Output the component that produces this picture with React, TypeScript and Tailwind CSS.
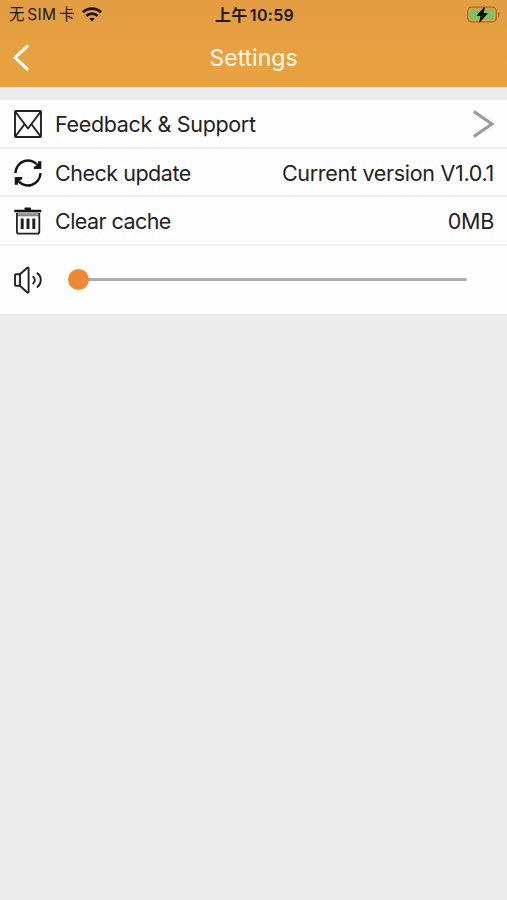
import React, { useState } from 'react';

const WifiIcon = () => (
  <svg width="20" height="15" viewBox="0 0 20 15" fill="none" stroke="#1d1206" strokeWidth="2.9">
    <path d="M1 5.2C6 0.4 14 0.4 19 5.2" />
    <path d="M4.3 8.9C7.5 5.9 12.5 5.9 15.7 8.9" />
    <path d="M10 14.6L7.2 11.7C8.8 10.3 11.2 10.3 12.8 11.7Z" fill="#1d1206" stroke="none" />
  </svg>
);

const BatteryIcon = () => (
  <svg width="33" height="18" viewBox="0 0 33 18" fill="none">
    <rect x="0.7" y="1.2" width="28.6" height="14.6" rx="4" stroke="#a86c24" strokeWidth="1.3" />
    <rect x="2.8" y="3.3" width="24.4" height="10.4" rx="2" fill="#7cc268" />
    <path d="M31 5.8C33 6.5 33 10.5 31 11.2Z" fill="#a86c24" />
    <path
      d="M17.6 1.1L10.2 9.4H14.3L12.6 16.1L20.2 7.6H16Z"
      fill="#0c0a04"
      stroke="#0c0a04"
      strokeWidth="1"
      strokeLinejoin="round"
    />
  </svg>
);

const BackIcon = () => (
  <svg width="18" height="28" viewBox="0 0 18 28" fill="none" stroke="#fffaf0" strokeWidth="3.2" strokeLinecap="round" strokeLinejoin="round">
    <path d="M15.2 2.4L3 13.6L15.2 25" />
  </svg>
);

const MailIcon = () => (
  <svg width="28" height="28" viewBox="0 0 28 28" fill="none" stroke="#222" strokeWidth="1.9" strokeLinejoin="round">
    <rect x="1" y="1" width="26" height="26" rx="0.8" />
    <path d="M1.5 2L14 18.5L26.5 2" />
    <path d="M1.5 26.2L10.5 14.2M26.5 26.2L17.5 14.2" />
  </svg>
);

const UpdateIcon = () => (
  <svg width="28" height="28" viewBox="0 0 28 28" fill="none" stroke="#151515" strokeWidth="2.4">
    <path d="M1.5 14A12.5 12.5 0 0 1 24.6 7.4" />
    <path d="M26.5 14A12.5 12.5 0 0 1 3.4 20.6" />
    <path d="M27.3 2.2V9.8H19.8V7.4L24 7V2.2Z" fill="#151515" stroke="none" />
    <path d="M27.3 9.8H19.6L23.6 5.6Z" fill="#151515" stroke="none" />
    <path d="M0.7 25.8V18.2H8.2V20.6L4 21V25.8Z" fill="#151515" stroke="none" />
    <path d="M0.7 18.2H8.4L4.4 22.4Z" fill="#151515" stroke="none" />
  </svg>
);

const TrashIcon = () => (
  <svg width="28" height="28" viewBox="0 0 28 28" fill="none">
    <path d="M10.5 2.8V1.2Q10.5 0.5 11.3 0.5H16.1Q17 0.5 17 1.2V2.8H27.3V5.3H0.3V2.8Z" fill="#111" />
    <rect x="2.8" y="5.3" width="22.6" height="3.3" fill="#999" />
    <path d="M2.9 6V24.4Q2.9 26.7 5 26.7H23.2Q25.3 26.7 25.3 24.4V6" stroke="#222" strokeWidth="1.8" />
    <path d="M2.9 8.8H25.2" stroke="#555" strokeWidth="0.8" />
    <path d="M8.2 11.4V22M14 11.4V22M19.8 11.4V22" stroke="#222" strokeWidth="3" />
  </svg>
);

const VolumeIcon = () => (
  <svg width="28" height="28" viewBox="0 0 28 28" fill="none" stroke="#222" strokeWidth="1.9" strokeLinecap="round" strokeLinejoin="round">
    <path d="M6 8.3H1.8Q1 8.3 1 9.2V19Q1 19.8 1.8 19.8H6" />
    <path d="M6 8.3V19.8L13 26.2Q14.6 27.4 14.6 25.8V2.4Q14.6 0.8 13 2Z" />
    <path d="M19.2 10.8Q20.8 12 20.8 14.1Q20.8 16.2 19.2 17.4" />
    <path d="M23.5 7.2Q26.8 9.8 26.8 14.1Q26.8 18.4 23.5 21" />
  </svg>
);

const ArrowIcon = () => (
  <svg width="22" height="28" viewBox="0 0 22 28" fill="none" stroke="#9b9b9b" strokeWidth="3">
    <path d="M1.8 1.6L20 14L1.8 26.4" />
  </svg>
);

const rows = [
  { icon: <MailIcon />, label: 'Feedback & Support', labelClass: 'tracking-[-0.34px]', value: <ArrowIcon /> },
  { icon: <UpdateIcon />, label: 'Check update', labelClass: 'tracking-[-0.48px]', value: 'Current version V1.0.1' },
  { icon: <TrashIcon />, label: 'Clear cache', labelClass: 'tracking-[-0.56px]', value: '0MB' },
];

const App = () => {
  const [volume] = useState(0);

  return (
    <div className="h-[900px] w-full overflow-hidden bg-[#ebebeb] text-[#222] font-['Inter','Noto_Sans_CJK_SC',sans-serif]">
      <header className="h-[87px] bg-linear-to-b from-[#e39d42] to-[#eaa341]">
        <div className="grid h-[29px] grid-cols-3 items-center pl-[9px] pr-[7px] text-[#24170a]">
          <div className="flex items-center gap-[7px]">
            <span className="whitespace-nowrap pt-px text-[15.5px] leading-none tracking-[0.3px] [word-spacing:-2.1px]">无 SIM 卡</span>
            <WifiIcon />
          </div>
          <div className="whitespace-nowrap text-center text-[16px] font-semibold leading-none tracking-[0.3px] [word-spacing:-2px]">
            上午 10:59
          </div>
          <div className="flex justify-end">
            <BatteryIcon />
          </div>
        </div>
        <div className="grid h-[57px] grid-cols-3 items-center px-3">
          <button aria-label="Back" className="w-[18px]">
            <BackIcon />
          </button>
          <h1 className="pt-px text-center text-[23px] leading-none text-[#fff8e8]">Settings</h1>
        </div>
      </header>

      <main className="mt-[13px] bg-[#fefefe]">
        {rows.map((row) => (
          <div
            key={row.label}
            className="flex h-[48.6px] items-center border-b-2 border-[#f1f1f1] pl-[14px] pr-[13px] pt-[2px] text-[21.5px]"
          >
            {row.icon}
            <span className={`ml-[13px] ${row.labelClass}`}>{row.label}</span>
            <span className="ml-auto tracking-[-0.3px]">{row.value}</span>
          </div>
        ))}
        <div className="flex h-[68px] items-center pl-[14px] pr-[40px]">
          <VolumeIcon />
          <div className="relative ml-[26px] flex h-[21px] flex-1 items-center">
            <div className="h-[3px] w-full rounded-full bg-[#adadad]" />
            <div className="absolute top-0 size-[21px] rounded-full bg-[#ee8835]" style={{ left: `${volume}%` }} />
          </div>
        </div>
      </main>
    </div>
  );
};

export default App;
